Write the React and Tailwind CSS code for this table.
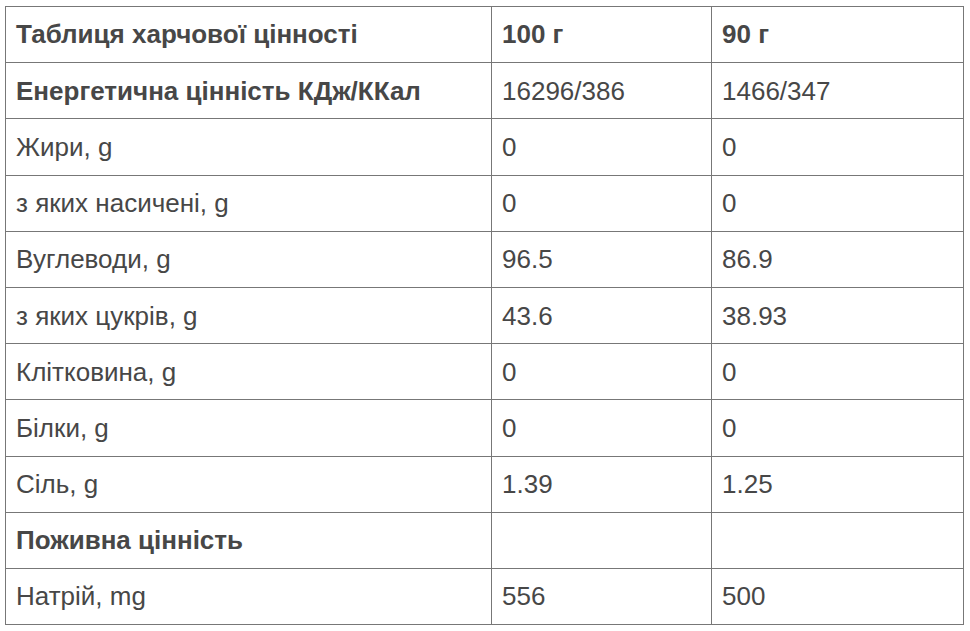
const rows = [
  ['Енергетична цінність КДж/ККал', '16296/386', '1466/347', true],
  ['Жири, g', '0', '0'],
  ['з яких насичені, g', '0', '0'],
  ['Вуглеводи, g', '96.5', '86.9'],
  ['з яких цукрів, g', '43.6', '38.93'],
  ['Клітковина, g', '0', '0'],
  ['Білки, g', '0', '0'],
  ['Сіль, g', '1.39', '1.25'],
  ['Поживна цінність', '', '', true],
  ['Натрій, mg', '556', '500'],
]

export default function App() {
  return (
    <div className="bg-white w-[970px] h-[631px] pt-[6px] pl-[5px]" style={{ fontFamily: '"Liberation Sans", Arial, sans-serif' }}>
      <table className="border-collapse text-[26px] leading-[32px] text-[#474747] w-[958px] table-fixed">
        <colgroup>
          <col className="w-[486px]" />
          <col className="w-[220px]" />
          <col className="w-[252px]" />
        </colgroup>
        <tbody>
          <tr className="h-[56.2px]">
            <td className="border-[1.5px] border-[#777] pl-[10px] pr-[11px] pb-[2px] font-bold">Таблиця харчової цінності</td>
            <td className="border-[1.5px] border-[#777] pl-[10px] pr-[11px] pb-[2px] font-bold">100 г</td>
            <td className="border-[1.5px] border-[#777] pl-[10px] pr-[11px] pb-[2px] font-bold">90 г</td>
          </tr>
          {rows.map(([name, a, b, bold]) => (
            <tr key={name} className="h-[56.2px]">
              <td className={`border-[1.5px] border-[#777] pl-[10px] pr-[11px] ${bold ? 'font-bold' : ''}`}>{name}</td>
              <td className="border-[1.5px] border-[#777] pl-[10px] pr-[11px]">{a}</td>
              <td className="border-[1.5px] border-[#777] pl-[10px] pr-[11px]">{b}</td>
            </tr>
          ))}
        </tbody>
      </table>
    </div>
  )
}
